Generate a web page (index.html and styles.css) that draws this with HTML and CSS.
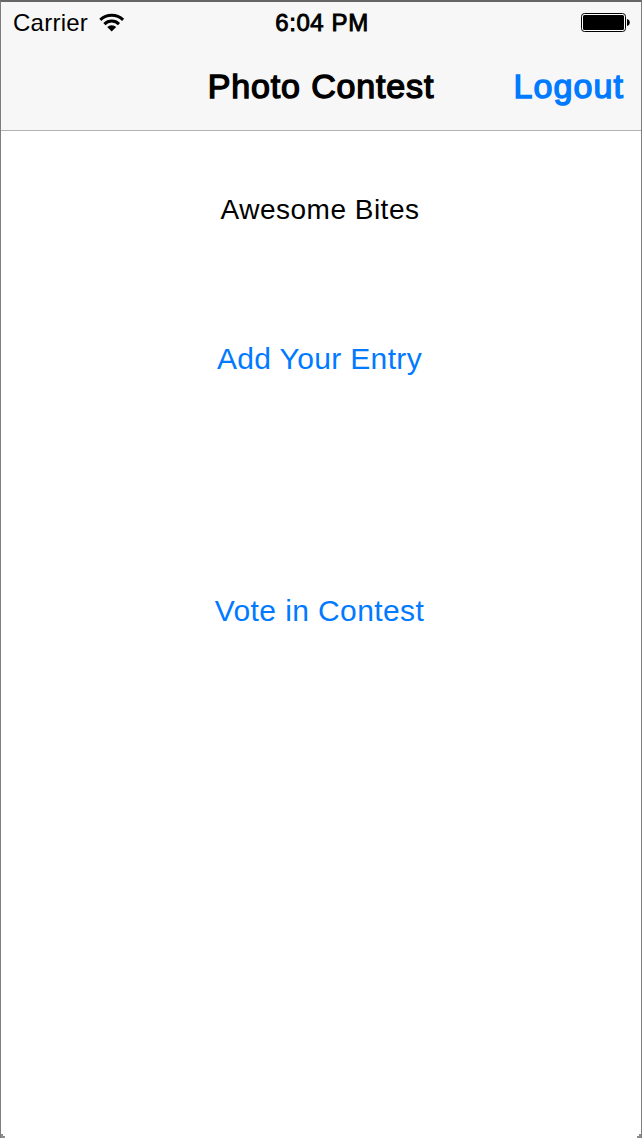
FILE: index.html
```html
<!DOCTYPE html>
<html lang="en">
<head>
<meta charset="utf-8">
<title>Photo Contest</title>
<link rel="stylesheet" href="styles.css">
</head>
<body>
<div class="screen">
  <header class="header">
    <div class="status">
      <div class="status-left">
        <span class="carrier">Carrier</span>
        <svg class="wifi" width="26" height="20" viewBox="0 0 26 20">
          <path d="M1.3 6.8 A16.6 16.6 0 0 1 24.1 6.8" fill="none" stroke="#000" stroke-width="3"/>
          <path d="M5.4 11.1 A10.4 10.4 0 0 1 20 11.1" fill="none" stroke="#000" stroke-width="3"/>
          <path d="M12.7 18.6 L8.2 14 A6.4 6.4 0 0 1 17.2 14 Z" fill="#000"/>
        </svg>
      </div>
      <span class="time">6:04 PM</span>
      <svg class="battery" width="50" height="20" viewBox="0 0 50 20">
        <rect x=".5" y=".5" width="44" height="18" rx="3" fill="#fff" stroke="#000"/>
        <rect x="2" y="2" width="41" height="15" rx="1.5" fill="#000"/>
        <path d="M46 6 A3.6 3.6 0 0 1 46 13 Z" fill="#000"/>
      </svg>
    </div>
    <div class="navbar">
      <h1 class="title">Photo Contest</h1>
      <a class="logout">Logout</a>
    </div>
  </header>
  <main class="content">
    <p class="contest-name">Awesome Bites</p>
    <a class="action add">Add Your Entry</a>
    <a class="action vote">Vote in Contest</a>
  </main>
  <div class="corners">
    <svg width="5" height="6" viewBox="0 0 5 6"><path d="M0 0V6H5V4H3V2H1V0Z" fill="#8c8c8c"/></svg>
    <svg width="5" height="6" viewBox="0 0 5 6"><path d="M5 0V6H0V4H2V2H4V0Z" fill="#8c8c8c"/></svg>
  </div>
</div>
</body>
</html>
```
FILE: styles.css
```css
* { box-sizing: border-box; }
body {
  margin: 0;
  font-family: "Liberation Sans", Arial, sans-serif;
  color: #000;
  background: #fff;
}
.screen {
  display: flex;
  flex-direction: column;
  width: 642px;
  height: 1138px;
  border: solid #7d7d7d;
  border-width: 2px 1px 0;
  border-top-color: #666;
  overflow: hidden;
}
.header {
  height: 129px;
  background: #f7f7f7;
  border-bottom: 1px solid #b2b2b2;
}
.status {
  display: grid;
  grid-template-columns: 1fr auto 1fr;
  align-items: center;
  height: 41px;
  padding: 0 10px 0 12px;
  font-size: 24px;
  line-height: 40px;
}
.status-left { display: flex; align-items: center; gap: 11px; }
.carrier { letter-spacing: .25px; }
.time { letter-spacing: .6px; -webkit-text-stroke: .9px #000; }
.battery { justify-self: end; }
.navbar {
  display: grid;
  grid-template-columns: 1fr auto 1fr;
  align-items: center;
  height: 87px;
  padding: 0 17px;
  font-size: 34px;
}
.title {
  grid-column: 2;
  margin: 0;
  font-size: 34px;
  font-weight: 400;
  letter-spacing: .85px;
  -webkit-text-stroke: 1.4px #000;
}
.logout {
  justify-self: end;
  color: #007aff;
  letter-spacing: 1.1px;
  -webkit-text-stroke: 1.4px #007aff;
}
.content {
  display: flex;
  flex-direction: column;
  align-items: center;
  flex: 1;
  padding: 59px 2px 0 0;
}
.contest-name {
  margin: 0;
  font-size: 28px;
  line-height: 40px;
  letter-spacing: .5px;
}
.action {
  font-size: 30px;
  line-height: 40px;
  color: #007aff;
}
.add { margin: 109px 1px 0 0; letter-spacing: .35px; }
.vote { margin: 212px 1px 0 0; letter-spacing: .4px; }
.corners { display: flex; justify-content: space-between; margin: 0 -1px; }
.corners svg { display: block; }
```
